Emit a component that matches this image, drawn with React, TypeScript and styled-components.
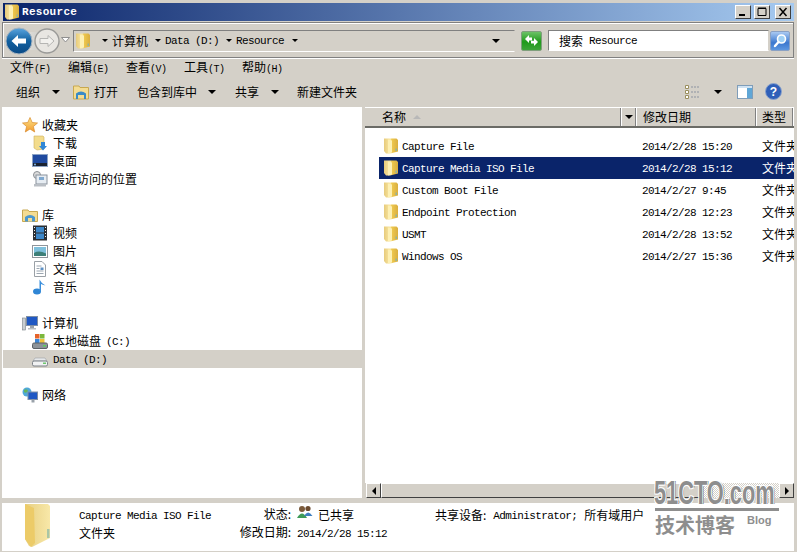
import React from "react";
import styled, { createGlobalStyle } from "styled-components";

const cjk = `"Noto Sans CJK SC", sans-serif`;
const mono = `"Liberation Mono", "Noto Sans CJK SC", monospace`;

const Global = createGlobalStyle`
  html, body { margin: 0; padding: 0; background: #d4d0c8; }
  * { box-sizing: border-box; }
`;

const Win = styled.div`
  position: relative; width: 797px; height: 552px; overflow: hidden;
  background: #d4d0c8; padding: 3px 3px 1px 2px;
  display: flex; flex-direction: column;
  font: 12px/16px ${cjk}; color: #000;
`;
const Title = styled.div`
  height: 18px; margin-left: 1px; flex: none;
  background: linear-gradient(90deg, #0a246a 0%, #a6caf0 100%);
  display: flex; align-items: center; padding: 0 3px 0 2px; gap: 3px;
`;
const TitleText = styled.span`
  font: bold 11px/16px "Liberation Mono", monospace; color: #fff; letter-spacing: 0.3px; flex: 1;
`;
const CapBtn = styled.div<{ $gap?: number }>`
  width: 16px; height: 14px; margin-left: ${p => p.$gap ?? 0}px; background: #d4d0c8;
  border: 1px solid; border-color: #fff #404040 #404040 #fff;
  display: flex; align-items: center; justify-content: center;
`;
const NavBar = styled.div`
  height: 36px; margin-top: 1px; flex: none; display: flex; align-items: center;
  border: 1px solid #808080; box-shadow: inset 1px 1px 0 #fff, 0 1px 0 #fff;
  padding: 0 3px 0 2px;
`;
const NavBack = styled.div`
  flex: none; display: flex; align-items: center; gap: 1px; margin-right: 1px; margin-top: 1px;
  background: linear-gradient(90deg, transparent 14px, #e9e8e4 14px, #c9c8c4 40px, transparent 40px) no-repeat center / 100% 18px;
`;
const AddressBox = styled.div`
  width: 442px; height: 22px; margin-left: 3px; flex: none; margin-top: 1px; display: flex; align-items: center; gap: 4px;
  border: 1px solid; border-color: #808080 #d4d0c8 #fff #808080; padding-left: 2px;
`;
const Crumb = styled.span<{ $w: number; $mono?: boolean }>`
  width: ${p => p.$w}px; flex: none; white-space: pre;
  font: ${p => (p.$mono ? `11px/16px ${mono}` : `12px/16px ${cjk}`)};
  ${p => p.$mono && "letter-spacing: -0.6px;"}
`;
const Spacer = styled.div<{ $w?: number }>`
  ${p => (p.$w !== undefined ? `flex: none; width: ${p.$w}px;` : "flex: 1;")}
`;
const Tri = styled.i<{ $w?: number }>`
  display: block; flex: none; width: 0; height: 0; font-style: normal;
  border-left: ${p => p.$w ?? 3}px solid transparent; border-right: ${p => p.$w ?? 3}px solid transparent;
  border-top: ${p => p.$w ?? 3}px solid #000;
`;
const GoBtn = styled.div`
  width: 21px; height: 20px; margin-left: 6px; flex: none; border-radius: 2px; margin-top: 1px;
  background: linear-gradient(#6cc266, #1f9a1a 55%, #3da538);
  border: 1px solid #7f9f7c; display: flex; align-items: center; justify-content: center;
`;
const SearchBox = styled.div`
  width: 221px; height: 21px; margin-left: 6px; flex: none; margin-top: 1px; background: #fff;
  border: 1px solid; border-color: #808080 #d4d0c8 #fff #808080;
  display: flex; align-items: center; padding-left: 10px; gap: 6px;
`;
const SearchBtn = styled.div`
  width: 20px; height: 20px; margin-left: 1px; flex: none; margin-top: 1px; border-radius: 2px;
  background: linear-gradient(#a9c9f2, #3c78cf 60%, #5c97e0);
  border: 1px solid #8aa1c4; display: flex; align-items: center; justify-content: center;
`;
const MonoText = styled.span`
  display: inline-block; padding-top: 1px;
  font: 11px/16px ${mono}; letter-spacing: -0.6px; white-space: pre;
`;
const Small = styled.span`
  font: 10px/16px "Liberation Mono", monospace; letter-spacing: -0.5px;
`;
const MenuBar = styled.div`
  height: 20px; flex: none; display: flex; align-items: center; padding-left: 8px;
`;
const MenuItem = styled.span`
  width: 58px; flex: none; white-space: nowrap; font-size: 12px;
`;
const Commands = styled.div`
  height: 29px; flex: none; display: flex; align-items: center; padding: 0 12px 2px 14px;
`;
const Cmd = styled.span<{ $w: number }>`
  width: ${p => p.$w}px; flex: none; display: flex; align-items: center; white-space: nowrap;
`;
const Main = styled.div`
  height: 391px; flex: none; display: flex; gap: 3px;
`;
const Tree = styled.div`
  width: 360px; flex: none; background: #fff; padding: 9px 0 0 1px;
`;
const TreeRow = styled.div<{ $child?: boolean; $sel?: boolean; $gap?: boolean }>`
  height: 18px; display: flex; align-items: center; gap: ${p => (p.$child ? 5 : 4)}px;
  padding-left: ${p => (p.$child ? 29 : 19)}px;
  margin-top: ${p => (p.$gap ? 18 : 0)}px;
  background: ${p => (p.$sel ? "#d4d0c8" : "transparent")};
`;
const Ico = styled.span<{ $w?: number }>`
  width: ${p => p.$w ?? 16}px; height: 16px; flex: none; display: flex; align-items: center; justify-content: center;
`;
const Files = styled.div`
  flex: 1; min-width: 0; background: #fff; display: flex; flex-direction: column;
`;
const Header = styled.div`
  height: 21px; flex: none; background: #d4d0c8; display: grid; grid-template-columns: 257px 15px 120px 1fr;
  border-top: 1px solid #fff; border-bottom: 2px solid #6b6b66;
`;
const HeadCell = styled.div<{ $pad?: number; $center?: boolean }>`
  display: flex; align-items: center; gap: 7px; padding-left: ${p => p.$pad ?? 0}px;
  justify-content: ${p => (p.$center ? "center" : "flex-start")};
  border-right: 1px solid #fff; box-shadow: inset -1px 0 0 #808080;
  white-space: nowrap; overflow: hidden;
`;
const SortMark = styled.i`
  display: block; width: 0; height: 0;
  border-left: 4px solid transparent; border-right: 4px solid transparent; border-bottom: 4px solid #b8b8b8;
`;
const FileList = styled.div`
  flex: 1; padding: 7px 0 0 14px; overflow: hidden;
`;
const FileRow = styled.div<{ $sel?: boolean }>`
  height: 22px; display: grid; grid-template-columns: 263px 120px 1fr; align-items: center;
  background: ${p => (p.$sel ? "#0a246a" : "transparent")};
  color: ${p => (p.$sel ? "#fff" : "#000")};
`;
const NameCell = styled.div`
  display: flex; align-items: center; gap: 4px; padding-left: 5px;
`;
const TypeCell = styled.span`
  white-space: nowrap; overflow: hidden;
`;
const HScroll = styled.div`
  height: 15px; flex: none; display: flex; background: #d4d0c8; padding-left: 1px;
`;
const ScrollBtn = styled.div`
  width: 15px; flex: none; background: #d4d0c8; border: 1px solid; border-color: #fff #404040 #404040 #fff;
  display: flex; align-items: center; justify-content: center;
`;
const Thumb = styled.div`
  width: 320px; flex: none; border: 1px solid; border-color: #fff #404040 #404040 #fff;
`;
const Track = styled.div`
  flex: 1;
  background: repeating-conic-gradient(#fff 0 25%, #d4d0c8 0 50%) 0 0 / 2px 2px;
`;
const ArrowL = styled.i`
  display: block; width: 0; height: 0;
  border-top: 4px solid transparent; border-bottom: 4px solid transparent; border-right: 4px solid #000;
`;
const ArrowR = styled.i`
  display: block; width: 0; height: 0;
  border-top: 4px solid transparent; border-bottom: 4px solid transparent; border-left: 4px solid #000;
`;
const Details = styled.div`
  margin-top: 5px; height: 48px; flex: none; background: #fff; position: relative;
  display: grid; grid-template-columns: 75px 160px 58px 138px 1fr; grid-template-rows: 18px 18px;
  padding-top: 3px;
`;
const BigFolder = styled.div`
  grid-row: 1 / 3; padding: 0 0 0 20px; margin-top: -3px;
`;
const Label = styled.span`
  text-align: right; white-space: nowrap; padding-right: 4px;
`;
const Value = styled.div<{ $gap?: number }>`
  display: flex; align-items: center; gap: ${p => p.$gap ?? 5}px; padding-left: 2px; white-space: nowrap;
`;
const PeopleWrap = styled.span`
  display: flex; flex: none; margin-top: -6px;
`;
const Watermark = styled.div`
  position: absolute; left: 654px; top: 477px; width: 130px; height: 62px;
  color: #8e8e8e; font-family: "Liberation Sans", sans-serif; font-weight: bold;
`;
const WmTop = styled.div`
  font-size: 33px; line-height: 32px; white-space: nowrap; transform-origin: left top; transform: scaleX(0.66);
  text-shadow: 1px 1px 0 #fff, -1px -1px 0 #fff, 1px -1px 0 #fff, -1px 1px 0 #fff, 2px 0 0 #707070;
`;
const WmLine = styled.div`
  height: 3px; width: 124px; background: #8e8e8e; margin-left: 1px; margin-top: -1px;
`;
const WmBottom = styled.div`
  display: flex; align-items: flex-start; margin-top: 3px; padding-left: 1px;
`;
const WmCn = styled.span`
  font: bold 20px/22px ${cjk}; width: 92px; flex: none; white-space: nowrap;
`;
const WmBlog = styled.span`
  font-size: 11px; line-height: 12px;
`;

const Folder = ({ id }: { id: string }) => (
  <svg width="14" height="16" viewBox="1 0 14 16">
    <defs>
      <linearGradient id={id} x1="0" y1="0" x2="1" y2="0">
        <stop offset="0" stopColor="#e7cb7c" />
        <stop offset=".45" stopColor="#fbe9a4" />
        <stop offset=".55" stopColor="#efc94f" />
        <stop offset="1" stopColor="#d9ae3f" />
      </linearGradient>
    </defs>
    <path d="M1 .5 L13.5 .5 L15 2 L15 13.5 L7 15.5 L3 15.5 L1 13Z" fill={`url(#${id})`} />
    <path d="M5 1.5 L9 2.5 L9 14.5 L5 15.5Z" fill="#fdf0b4" />
    <rect x="12.5" y="10.5" width="1.5" height="2.5" fill="#8fb3a0" />
  </svg>
);
const LargeFolder = () => (
  <svg width="30" height="44" viewBox="0 0 30 44">
    <defs>
      <linearGradient id="lf" x1="0" y1="0" x2="1" y2="0">
        <stop offset="0" stopColor="#e7cf82" />
        <stop offset="1" stopColor="#f8e8a8" />
      </linearGradient>
    </defs>
    <path d="M3 1 L26 1 L28 3 L28 35 L10 44 L7 43 L3 36Z" fill="url(#lf)" />
    <path d="M3 1 L12 5 L13 40 L9 44 L3 36Z" fill="#eccb68" />
    <rect x="25" y="26" width="2.5" height="9" fill="#a9c6a6" />
  </svg>
);
const Star = () => (
  <svg width="16" height="16" viewBox="0 0 16 16">
    <defs>
      <linearGradient id="st" x1="0" y1="0" x2="0" y2="1">
        <stop offset="0" stopColor="#fde58a" />
        <stop offset="1" stopColor="#f29a2e" />
      </linearGradient>
    </defs>
    <path d="M8 .5 L10.2 5.5 L15.5 6 L11.4 9.5 L12.7 15 L8 12 L3.3 15 L4.6 9.5 L.5 6 L5.8 5.5Z" fill="url(#st)" stroke="#d98a2b" strokeWidth=".7" />
  </svg>
);
const Download = () => (
  <svg width="16" height="16" viewBox="0 0 16 16">
    <path d="M2 1 L11 1 L12 2 L12 14 L5 15 L2 13Z" fill="#f3dc8c" stroke="#cdb060" strokeWidth=".6" />
    <path d="M9 7 L13 7 L13 11 L15 11 L11 15.5 L7 11 L9 11Z" fill="#2f86d5" />
  </svg>
);
const Desktop = () => (
  <svg width="16" height="16" viewBox="0 0 16 16">
    <rect x="0.5" y="1.5" width="15" height="12" fill="#1f4aa0" stroke="#8ca3c5" />
    <rect x="1" y="10" width="14" height="3" fill="#1a2230" />
    <circle cx="3" cy="11.5" r="1" fill="#7fb4e8" />
  </svg>
);
const Recent = () => (
  <svg width="16" height="16" viewBox="0 0 16 16">
    <circle cx="5" cy="4" r="3.5" fill="#ddd" stroke="#8a8f94" />
    <rect x="4" y="4" width="11" height="9" fill="#e6ecf2" stroke="#8a929c" />
    <rect x="7" y="6" width="5" height="3" fill="#7fa8cf" />
    <rect x="2" y="13" width="12" height="2.5" fill="#b9bec4" />
  </svg>
);
const Library = () => (
  <svg width="16" height="16" viewBox="0 0 16 16">
    <path d="M0.5 3 L6 3 L7 4.5 L15.5 4.5 L15.5 14.5 L0.5 14.5Z" fill="#f4dc92" stroke="#c8a850" />
    <path d="M3 14.5 L3 10 Q8 6 13 10 L13 14.5Z" fill="#4a97cf" />
    <rect x="6" y="11" width="4" height="3.5" fill="#f4dc92" />
  </svg>
);
const Video = () => (
  <svg width="16" height="16" viewBox="0 0 16 16">
    <rect x="1" y="0.5" width="14" height="15" fill="#2a2e33" />
    <rect x="4" y="2" width="8" height="5.5" fill="#3b86c8" />
    <rect x="4" y="8.5" width="8" height="5.5" fill="#3b86c8" />
    <path d="M2 2h1v1H2zM2 5h1v1H2zM2 8h1v1H2zM2 11h1v1H2zM13 2h1v1h-1zM13 5h1v1h-1zM13 8h1v1h-1zM13 11h1v1h-1z" fill="#eee" />
  </svg>
);
const Picture = () => (
  <svg width="16" height="16" viewBox="0 0 16 16">
    <rect x="0.5" y="2.5" width="15" height="12" fill="#fff" stroke="#8f959b" />
    <rect x="2" y="4" width="12" height="9" fill="#7fc0dc" />
    <path d="M2 13 L2 10 Q7 7 14 10.5 L14 13Z" fill="#3d7f78" />
  </svg>
);
const Doc = () => (
  <svg width="16" height="16" viewBox="0 0 16 16">
    <path d="M2.5 .5 L10 .5 L13.5 4 L13.5 15.5 L2.5 15.5Z" fill="#fff" stroke="#9aa0a6" />
    <path d="M4.5 5h5M4.5 7.5h3M4.5 10h7M4.5 12.5h7" stroke="#9ca7b2" />
    <rect x="8.5" y="6.5" width="3" height="2.5" fill="#5c8fc4" />
  </svg>
);
const Music = () => (
  <svg width="16" height="16" viewBox="0 0 16 16">
    <ellipse cx="5" cy="12.5" rx="4" ry="3" fill="#2f86d5" />
    <path d="M7.5 12 L7.5 0.5 Q9 4 13.5 6.5 Q10.5 5.5 9 5 L9 12.5Z" fill="#3b8fdc" />
  </svg>
);
const Computer = () => (
  <svg width="16" height="16" viewBox="0 0 16 16">
    <rect x="0.5" y="3" width="3" height="12" fill="#c9ced2" stroke="#7b8288" strokeWidth=".6" />
    <rect x="4.5" y="1.5" width="11" height="9" fill="#1f58c4" stroke="#7f8fa5" />
    <rect x="8" y="11" width="4" height="2" fill="#9aa2aa" />
    <rect x="6" y="13" width="8" height="1.5" fill="#b8bec4" />
  </svg>
);
const DiskC = () => (
  <svg width="16" height="16" viewBox="0 0 16 16">
    <rect x="3" y="1" width="4.5" height="4.5" fill="#e6632a" />
    <rect x="8" y="1" width="4.5" height="4.5" fill="#7cb83c" />
    <rect x="3" y="6" width="4.5" height="4" fill="#3a86d8" />
    <rect x="8" y="6" width="4.5" height="4" fill="#f0c33c" />
    <rect x="0.5" y="10" width="15" height="5.5" rx="1.5" fill="#8d9399" stroke="#5d6368" />
    <rect x="11" y="12" width="3" height="1.5" fill="#5ad05a" />
  </svg>
);
const DiskD = () => (
  <svg width="16" height="16" viewBox="0 0 16 16">
    <path d="M3 7 L13 7 L15 10 L1 10Z" fill="#e6e8ea" stroke="#9aa0a5" strokeWidth=".6" />
    <rect x="0.5" y="10" width="15" height="5" rx="1.5" fill="#f1f2f3" stroke="#7b8086" />
    <rect x="11" y="11.5" width="3" height="1.5" fill="#6cc66c" />
  </svg>
);
const Network = () => (
  <svg width="16" height="16" viewBox="0 0 16 16">
    <circle cx="5" cy="5" r="4.5" fill="#4fa8d8" />
    <path d="M2 3 Q5 1 6 4 Q4 7 2 5Z" fill="#67b65a" />
    <rect x="6" y="5" width="9.5" height="7.5" fill="#1f58c4" stroke="#7f8fa5" />
    <rect x="9.5" y="12.5" width="3" height="3" fill="#9aa2aa" />
  </svg>
);
const Open = () => (
  <svg width="16" height="16" viewBox="0 0 16 16">
    <path d="M.5 2 L6 2 L7 3.5 L15.5 3.5 L15.5 15 L.5 15Z" fill="#f4dc92" stroke="#c8a850" />
    <path d="M3 15 L3 9.5 Q8 5.5 13 9.5 L13 15 L11 15 L11 11 L5 11 L5 15Z" fill="#3a8bc6" />
  </svg>
);
const Back = () => (
  <svg width="28" height="28" viewBox="0 0 28 28">
    <defs>
      <linearGradient id="bk" x1="0" y1="0" x2="0" y2="1">
        <stop offset="0" stopColor="#5aa6e0" />
        <stop offset=".5" stopColor="#12609f" />
        <stop offset="1" stopColor="#0a4a86" />
      </linearGradient>
    </defs>
    <circle cx="14" cy="14" r="13" fill="url(#bk)" stroke="#a7b4c0" />
    <path d="M6.5 14 L13 8 L13 11.5 L21 11.5 L21 16.5 L13 16.5 L13 20Z" fill="#fff" />
  </svg>
);
const Forward = () => (
  <svg width="26" height="26" viewBox="0 0 26 26">
    <circle cx="13" cy="13" r="12" fill="#e8e6e2" stroke="#9a9a98" strokeWidth="1.4" />
    <path d="M20 13 L14 7.5 L14 10.5 L6 10.5 L6 15.5 L14 15.5 L14 18.5Z" fill="#f2f1ee" stroke="#b5b5b3" />
  </svg>
);
const HistoryDrop = () => (
  <svg width="9" height="6" viewBox="0 0 9 6">
    <path d="M.5 .5 L8.5 .5 L4.5 5Z" fill="#fff" stroke="#8f8f8f" />
  </svg>
);
const Go = () => (
  <svg width="15" height="13" viewBox="0 0 15 13">
    <path d="M1 5 L5 1 L5 3.5 L8 3.5 L8 6.5 L5 6.5 L5 9Z" fill="#fff" />
    <path d="M14 8 L10 12 L10 9.5 L7 9.5 L7 6.8 L10 6.8 L10 4Z" fill="#fff" />
  </svg>
);
const Lens = () => (
  <svg width="15" height="15" viewBox="0 0 15 15">
    <circle cx="8.5" cy="6" r="4" fill="#9fd0f5" stroke="#fff" strokeWidth="1.6" />
    <path d="M5.5 9 L2 13" stroke="#fff" strokeWidth="2.4" strokeLinecap="round" />
  </svg>
);
const Views = () => (
  <svg width="16" height="14" viewBox="0 0 16 14">
    <path d="M0.5 .5h3v3h-3zM0.5 5.5h3v3h-3zM0.5 10.5h3v3h-3z" fill="#fff" stroke="#9a8f5e" />
    <path d="M6 2h9M6 7h9M6 12h9" stroke="#8c93a0" strokeDasharray="2 1" />
  </svg>
);
const Pane = () => (
  <svg width="16" height="14" viewBox="0 0 16 14">
    <rect x=".5" y=".5" width="15" height="13" fill="#fff" stroke="#7f9db9" />
    <rect x="10" y="1" width="5" height="12" fill="#5fa6d6" />
    <rect x="1" y="1" width="14" height="2" fill="#cfe2f2" />
  </svg>
);
const Help = () => (
  <svg width="17" height="17" viewBox="0 0 17 17">
    <circle cx="8.5" cy="8.5" r="8" fill="#2f5fb8" stroke="#8aa2cc" />
    <text x="8.5" y="13" textAnchor="middle" fontSize="12" fontWeight="bold" fontFamily="Liberation Sans" fill="#fff">?</text>
  </svg>
);
const People = () => (
  <svg width="16" height="15" viewBox="0 0 16 15">
    <circle cx="5" cy="4" r="3" fill="#7b5a3a" />
    <path d="M0 13 Q5 4 10 13Z" fill="#3f9b58" />
    <circle cx="11" cy="3.5" r="2.6" fill="#6b4a2e" />
    <path d="M7 11 Q11 4 15.5 11Z" fill="#3f7fc0" />
  </svg>
);
const CapGlyph = ({ k }: { k: "min" | "max" | "close" }) => (
  <svg width="11" height="10" viewBox="0 0 11 10">
    {k === "min" && <rect x="1" y="7" width="6" height="2" fill="#000" />}
    {k === "max" && <path d="M1 1.5h8v7h-8z M1 1h8" fill="none" stroke="#000" />}
    {k === "close" && <path d="M1.5 1 L8.5 9 M8.5 1 L1.5 9" stroke="#000" strokeWidth="1.5" />}
  </svg>
);

const favorites = [
  { icon: <Download />, label: "下载" },
  { icon: <Desktop />, label: "桌面" },
  { icon: <Recent />, label: "最近访问的位置" },
];
const libs = [
  { icon: <Video />, label: "视频" },
  { icon: <Picture />, label: "图片" },
  { icon: <Doc />, label: "文档" },
  { icon: <Music />, label: "音乐" },
];
const files = [
  ["Capture File", "2014/2/28 15:20"],
  ["Capture Media ISO File", "2014/2/28 15:12"],
  ["Custom Boot File", "2014/2/27 9:45"],
  ["Endpoint Protection", "2014/2/28 12:23"],
  ["USMT", "2014/2/28 13:52"],
  ["Windows OS", "2014/2/27 15:36"],
];

export default function App() {
  return (
    <Win>
      <Global />
      <Title>
        <Folder id="f-title" />
        <TitleText>Resource</TitleText>
        <CapBtn><CapGlyph k="min" /></CapBtn>
        <CapBtn><CapGlyph k="max" /></CapBtn>
        <CapBtn $gap={2}><CapGlyph k="close" /></CapBtn>
      </Title>
      <NavBar>
        <NavBack>
          <Back />
          <Forward />
        </NavBack>
        <HistoryDrop />
        <AddressBox>
          <Folder id="f-addr" />
          <Spacer $w={4} />
          <Tri />
          <Crumb $w={39}>计算机</Crumb>
          <Tri />
          <Crumb $w={57} $mono>Data (D:)</Crumb>
          <Tri />
          <Crumb $w={52} $mono>Resource</Crumb>
          <Tri />
          <Spacer />
          <Tri $w={4} />
          <Spacer $w={10} />
        </AddressBox>
        <GoBtn><Go /></GoBtn>
        <SearchBox>搜索<MonoText>Resource</MonoText></SearchBox>
        <SearchBtn><Lens /></SearchBtn>
      </NavBar>
      <MenuBar>
        <MenuItem>文件<Small>(F)</Small></MenuItem>
        <MenuItem>编辑<Small>(E)</Small></MenuItem>
        <MenuItem>查看<Small>(V)</Small></MenuItem>
        <MenuItem>工具<Small>(T)</Small></MenuItem>
        <MenuItem>帮助<Small>(H)</Small></MenuItem>
      </MenuBar>
      <Commands>
        <Cmd $w={36}>组织</Cmd>
        <Cmd $w={21}><Tri $w={4} /></Cmd>
        <Cmd $w={64}><Open /><Spacer $w={5} />打开</Cmd>
        <Cmd $w={71}>包含到库中</Cmd>
        <Cmd $w={27}><Tri $w={4} /></Cmd>
        <Cmd $w={36}>共享</Cmd>
        <Cmd $w={26}><Tri $w={4} /></Cmd>
        <Cmd $w={70}>新建文件夹</Cmd>
        <Spacer />
        <Views />
        <Spacer $w={13} />
        <Tri $w={4} />
        <Spacer $w={15} />
        <Pane />
        <Spacer $w={12} />
        <Help />
      </Commands>
      <Main>
        <Tree>
          <TreeRow><Ico><Star /></Ico>收藏夹</TreeRow>
          {favorites.map(f => <TreeRow $child key={f.label}><Ico>{f.icon}</Ico>{f.label}</TreeRow>)}
          <TreeRow $gap><Ico><Library /></Ico>库</TreeRow>
          {libs.map(f => <TreeRow $child key={f.label}><Ico>{f.icon}</Ico>{f.label}</TreeRow>)}
          <TreeRow $gap><Ico><Computer /></Ico>计算机</TreeRow>
          <TreeRow $child><Ico><DiskC /></Ico>本地磁盘<MonoText>(C:)</MonoText></TreeRow>
          <TreeRow $child $sel><Ico><DiskD /></Ico><MonoText>Data (D:)</MonoText></TreeRow>
          <TreeRow $gap><Ico><Network /></Ico>网络</TreeRow>
        </Tree>
        <Files>
          <Header>
            <HeadCell $pad={17}>名称<SortMark /></HeadCell>
            <HeadCell $center><Tri $w={4} /></HeadCell>
            <HeadCell $pad={6}>修改日期</HeadCell>
            <HeadCell $pad={5}>类型</HeadCell>
          </Header>
          <FileList>
            {files.map(([n, d], i) => (
              <FileRow $sel={i === 1} key={n}>
                <NameCell><Ico $w={14}><Folder id={`f-row-${i}`} /></Ico><MonoText>{n}</MonoText></NameCell>
                <MonoText>{d}</MonoText>
                <TypeCell>文件夹</TypeCell>
              </FileRow>
            ))}
          </FileList>
          <HScroll>
            <ScrollBtn><ArrowL /></ScrollBtn>
            <Thumb />
            <Track />
            <ScrollBtn><ArrowR /></ScrollBtn>
          </HScroll>
        </Files>
      </Main>
      <Details>
        <BigFolder><LargeFolder /></BigFolder>
        <Value><MonoText>Capture Media ISO File</MonoText></Value>
        <Label>状态:</Label>
        <Value><PeopleWrap><People /></PeopleWrap>已共享</Value>
        <Value $gap={7}>共享设备:<MonoText>Administrator;</MonoText>所有域用户</Value>
        <Value>文件夹</Value>
        <Label>修改日期:</Label>
        <Value><MonoText>2014/2/28 15:12</MonoText></Value>
      </Details>
      <Watermark>
        <WmTop>51CTO.com</WmTop>
        <WmLine />
        <WmBottom><WmCn>技术博客</WmCn><WmBlog>Blog</WmBlog></WmBottom>
      </Watermark>
    </Win>
  );
}
